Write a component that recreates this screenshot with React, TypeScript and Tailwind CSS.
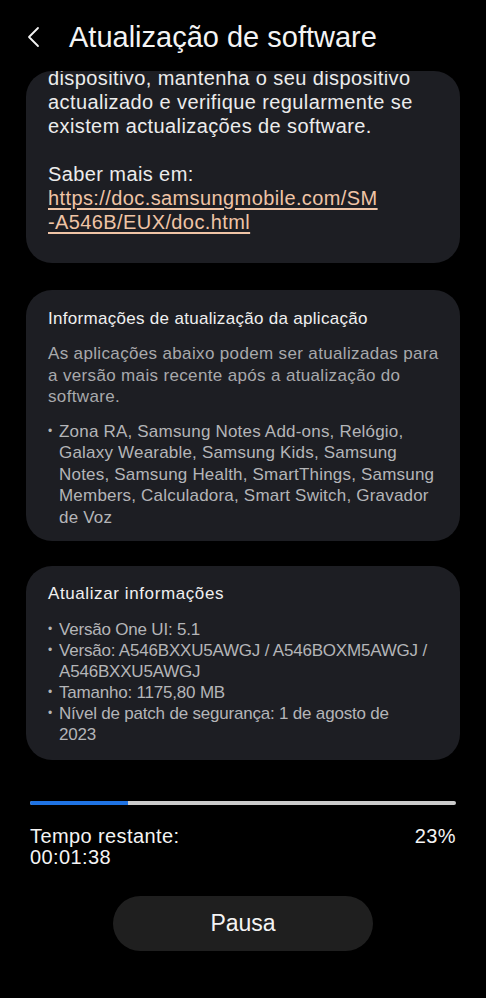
import { ReactNode } from "react";

const font = { fontFamily: '"Liberation Sans", Arial, sans-serif' };

function Card({ children, className }: { children: ReactNode; className?: string }) {
  return (
    <div className={"mx-[26px] rounded-[26px] bg-[#1d1e23] px-[22px] " + (className ?? "")}>
      {children}
    </div>
  );
}

function Bullet({ children }: { children: ReactNode }) {
  return (
    <div className="flex">
      <span className="w-[11px] shrink-0 text-[12px] tracking-normal">•</span>
      <span>{children}</span>
    </div>
  );
}

export default function App() {
  return (
    <div className="flex h-[998px] w-[486px] flex-col overflow-hidden bg-black text-white" style={font}>
      {/* header */}
      <div className="flex h-[71px] shrink-0 items-start pt-[19px]">
        <svg className="ml-[26px] mt-[7px]" width="16" height="22" viewBox="0 0 16 22" fill="none">
          <path d="M12 2 L3 11 L12 20" stroke="#f2f2f2" strokeWidth="1.8" strokeLinecap="round" strokeLinejoin="round" />
        </svg>
        <h1 className="ml-[27px] text-[29px] leading-[36px] text-[#f4f4f4]">Atualização de software</h1>
      </div>

      {/* scrolled card */}
      <Card className="h-[192px] overflow-hidden">
        <div className="-mt-[5px] whitespace-nowrap text-[20px] leading-[24px] tracking-[0.4px] text-[#ececec]">
          dispositivo, mantenha o seu dispositivo
          <br />
          actualizado e verifique regularmente se
          <br />
          existem actualizações de software.
          <br />
          <br />
          Saber mais em:
          <br />
          <span className="text-[#efc4a6] underline underline-offset-[3px]">
            https://doc.samsungmobile.com/SM
            <br />
            -A546B/EUX/doc.html
          </span>
        </div>
      </Card>

      <Card className="mt-[27px] pb-[13px] pt-[18px]">
        <div className="whitespace-nowrap text-[17px] leading-[22px] tracking-[0.3px] text-[#f0f0f0]">
          Informações de atualização da aplicação
        </div>
        <div className="mt-[13px] whitespace-nowrap text-[17px] leading-[21.5px] tracking-[0.35px] text-[#a8a9ac]">
          As aplicações abaixo podem ser atualizadas para
          <br />a versão mais recente após a atualização do
          <br />
          software.
        </div>
        <div className="mt-[13px] whitespace-nowrap text-[17px] leading-[21.5px] tracking-[0.2px] text-[#b4b5b8]">
          <Bullet>
            Zona RA, Samsung Notes Add-ons, Relógio,
            <br />
            Galaxy Wearable, Samsung Kids, Samsung
            <br />
            Notes, Samsung Health, SmartThings, Samsung
            <br />
            Members, Calculadora, Smart Switch, Gravador
            <br />
            de Voz
          </Bullet>
        </div>
      </Card>

      <Card className="mt-[25px] pb-[15px] pt-[17px]">
        <div className="text-[17px] leading-[22px] tracking-[0.6px] text-[#f0f0f0]">Atualizar informações</div>
        <div className="mt-[14px] whitespace-nowrap text-[17px] leading-[21px] tracking-[-0.2px] text-[#b4b5b8]">
          <Bullet>Versão One UI: 5.1</Bullet>
          <Bullet>
            Versão: A546BXXU5AWGJ / A546BOXM5AWGJ /
            <br />
            A546BXXU5AWGJ
          </Bullet>
          <Bullet>Tamanho: 1175,80 MB</Bullet>
          <Bullet>
            Nível de patch de segurança: 1 de agosto de
            <br />
            2023
          </Bullet>
        </div>
      </Card>

      {/* progress */}
      <div className="mx-[30px] mt-[41px] flex h-[4px] overflow-hidden rounded-full bg-[#cbcbcb]">
        <div className="h-full w-[23%] bg-[#1f73e3]" />
      </div>
      <div className="mx-[30px] mt-[21px] flex justify-between text-[20px] leading-[21px] tracking-[0.4px] text-[#f4f4f4]">
        <div>
          Tempo restante:
          <br />
          00:01:38
        </div>
        <div>23%</div>
      </div>

      <div className="mt-[28px] flex justify-center">
        <button className="flex h-[55px] w-[260px] items-center justify-center rounded-full bg-[#1f1f1f] text-[23px] text-[#f4f4f4]">
          Pausa
        </button>
      </div>
    </div>
  );
}
